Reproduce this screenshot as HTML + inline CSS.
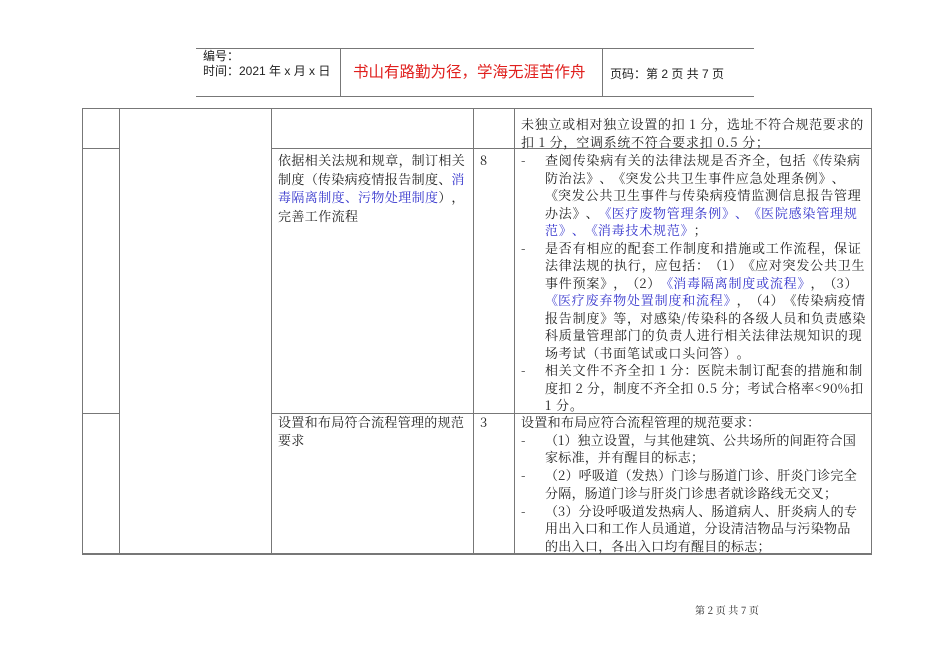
<!DOCTYPE html>
<html><head><meta charset="utf-8"><style>
*{margin:0;padding:0}
body{width:950px;height:672px;background:#fff;position:relative;overflow:hidden;font-family:"Noto Serif CJK SC","Noto Sans CJK SC",serif;color:#222}
.h{position:absolute;background:#777;height:1px}
.v{position:absolute;background:#777;width:1px}
.t{position:absolute;font-size:13px;white-space:nowrap;line-height:18px}
.p{display:inline-block;width:1em;text-align:center}
.pl{display:inline-block;width:1em;text-align:left}
.pr{display:inline-block;width:1em;text-align:right}
.b{color:#3333cc}
.s{font-family:"Liberation Sans","Noto Sans CJK SC",sans-serif}
</style></head><body>
<!-- header -->
<div class="h" style="left:196px;top:48px;width:558px"></div>
<div class="h" style="left:196px;top:96px;width:558px"></div>
<div class="v" style="left:340px;top:48px;height:48px"></div>
<div class="v" style="left:602px;top:48px;height:48px"></div>
<div class="t s" style="left:203px;top:49px;font-size:12px;line-height:15px">编号：<br>时间：2021 年 x 月 x 日</div>
<div class="t s" style="left:353px;top:63px;font-size:15.5px;color:#e0201e;line-height:20px">书山有路勤为径，学海无涯苦作舟</div>
<div class="t s" style="left:610px;top:65px;font-size:12px">页码：第 2 页  共 7 页</div>
<!-- table -->
<div class="h" style="left:82px;top:108px;width:790px"></div>
<div class="h" style="left:82px;top:148px;width:37px"></div>
<div class="h" style="left:271px;top:148px;width:601px"></div>
<div class="h" style="left:82px;top:413px;width:37px"></div>
<div class="h" style="left:271px;top:413px;width:601px"></div>
<div class="h" style="left:82px;top:553px;width:790px;height:2px"></div>
<div class="v" style="left:82px;top:108px;height:446px"></div>
<div class="v" style="left:119px;top:108px;height:446px"></div>
<div class="v" style="left:271px;top:108px;height:446px"></div>
<div class="v" style="left:473px;top:108px;height:446px"></div>
<div class="v" style="left:514px;top:108px;height:446px"></div>
<div class="v" style="left:871px;top:108px;height:446px"></div>

<div class="t" style="left:521px;top:115px;letter-spacing:0.7px">未独立或相对独立设置的扣 1 分<span class="pl">，</span>选址不符合规范要求的<br>扣 1 分<span class="pl">，</span>空调系统不符合要求扣 0.5 分<span class="pl">；</span></div>

<div class="t" style="left:278px;top:151px;line-height:18.5px;letter-spacing:0.4px">依据相关法规和规章<span class="pl">，</span>制订相关<br>制度<span class="pr">（</span>传染病疫情报告制度<span class="pl">、</span><span class="b">消<br>毒隔离制度<span class="pl">、</span>污物处理制度</span><span class="pl">）</span><span class="pl">，</span><br>完善工作流程</div>
<div class="t" style="left:480px;top:151px">8</div>
<div class="t" style="left:521px;top:151px;line-height:17.5px">-<br><br><br><br><br>-<br><br><br><br><br><br><br>-</div>
<div class="t" style="left:545px;top:151px;line-height:17.5px;letter-spacing:0.8px">查阅传染病有关的法律法规是否齐全<span class="pl">，</span>包括<span class="pr">《</span>传染病<br>防治法<span class="pl">》</span><span class="pl">、</span><span class="pr">《</span>突发公共卫生事件应急处理条例<span class="pl">》</span><span class="pl">、</span><br><span class="pr">《</span>突发公共卫生事件与传染病疫情监测信息报告管理<br>办法<span class="pl">》</span><span class="pl">、</span><span class="b"><span class="pr">《</span>医疗废物管理条例<span class="pl">》</span><span class="pl">、</span><span class="pr">《</span>医院感染管理规<br>范<span class="pl">》</span><span class="pl">、</span><span class="pr">《</span>消毒技术规范<span class="pl">》</span></span><span class="pl">；</span><br>是否有相应的配套工作制度和措施或工作流程<span class="pl">，</span>保证<br>法律法规的执行<span class="pl">，</span>应包括<span class="pl">：</span><span class="pr">（</span>1<span class="pl">）</span><span class="pr">《</span>应对突发公共卫生<br>事件预案<span class="pl">》</span><span class="pl">，</span><span class="pr">（</span>2<span class="pl">）</span><span class="b"><span class="pr">《</span>消毒隔离制度或流程<span class="pl">》</span></span><span class="pl">，</span><span class="pr">（</span>3<span class="pl">）</span><br><span class="b"><span class="pr">《</span>医疗废弃物处置制度和流程<span class="pl">》</span></span><span class="pl">，</span><span class="pr">（</span>4<span class="pl">）</span><span class="pr">《</span>传染病疫情<br>报告制度<span class="pl">》</span>等<span class="pl">，</span>对感染/传染科的各级人员和负责感染<br>科质量管理部门的负责人进行相关法律法规知识的现<br>场考试<span class="pr">（</span>书面笔试或口头问答<span class="pl">）</span><span class="pl">。</span><br>相关文件不齐全扣 1 分<span class="pl">：</span>医院未制订配套的措施和制<br><span style="letter-spacing:0.4px">度扣 2 分<span class="pl">，</span>制度不齐全扣 0.5 分<span class="pl">；</span>考试合格率&lt;90%扣</span><br>1 分<span class="pl">。</span></div>

<div class="t" style="left:278px;top:413px;line-height:17.7px;letter-spacing:0.3px">设置和布局符合流程管理的规范<br>要求</div>
<div class="t" style="left:480px;top:413px;line-height:17.7px">3</div>
<div class="t" style="left:521px;top:413px;line-height:17.7px;letter-spacing:0.3px">设置和布局应符合流程管理的规范要求<span class="pl">：</span><br>-<br><br>-<br><br>-</div>
<div class="t" style="left:545px;top:430.7px;line-height:17.7px;letter-spacing:0.3px"><span class="pr">（</span>1<span class="pl">）</span>独立设置<span class="pl">，</span>与其他建筑<span class="pl">、</span>公共场所的间距符合国<br>家标准<span class="pl">，</span>并有醒目的标志<span class="pl">；</span><br><span class="pr">（</span>2<span class="pl">）</span>呼吸道<span class="pr">（</span>发热<span class="pl">）</span>门诊与肠道门诊<span class="pl">、</span>肝炎门诊完全<br>分隔<span class="pl">，</span>肠道门诊与肝炎门诊患者就诊路线无交叉<span class="pl">；</span><br><span class="pr">（</span>3<span class="pl">）</span>分设呼吸道发热病人<span class="pl">、</span>肠道病人<span class="pl">、</span>肝炎病人的专<br>用出入口和工作人员通道<span class="pl">，</span>分设清洁物品与污染物品<br>的出入口<span class="pl">，</span>各出入口均有醒目的标志<span class="pl">；</span></div>

<div class="t" style="left:695px;top:601px;font-size:10px">第 2 页 共 7 页</div>
</body></html>
